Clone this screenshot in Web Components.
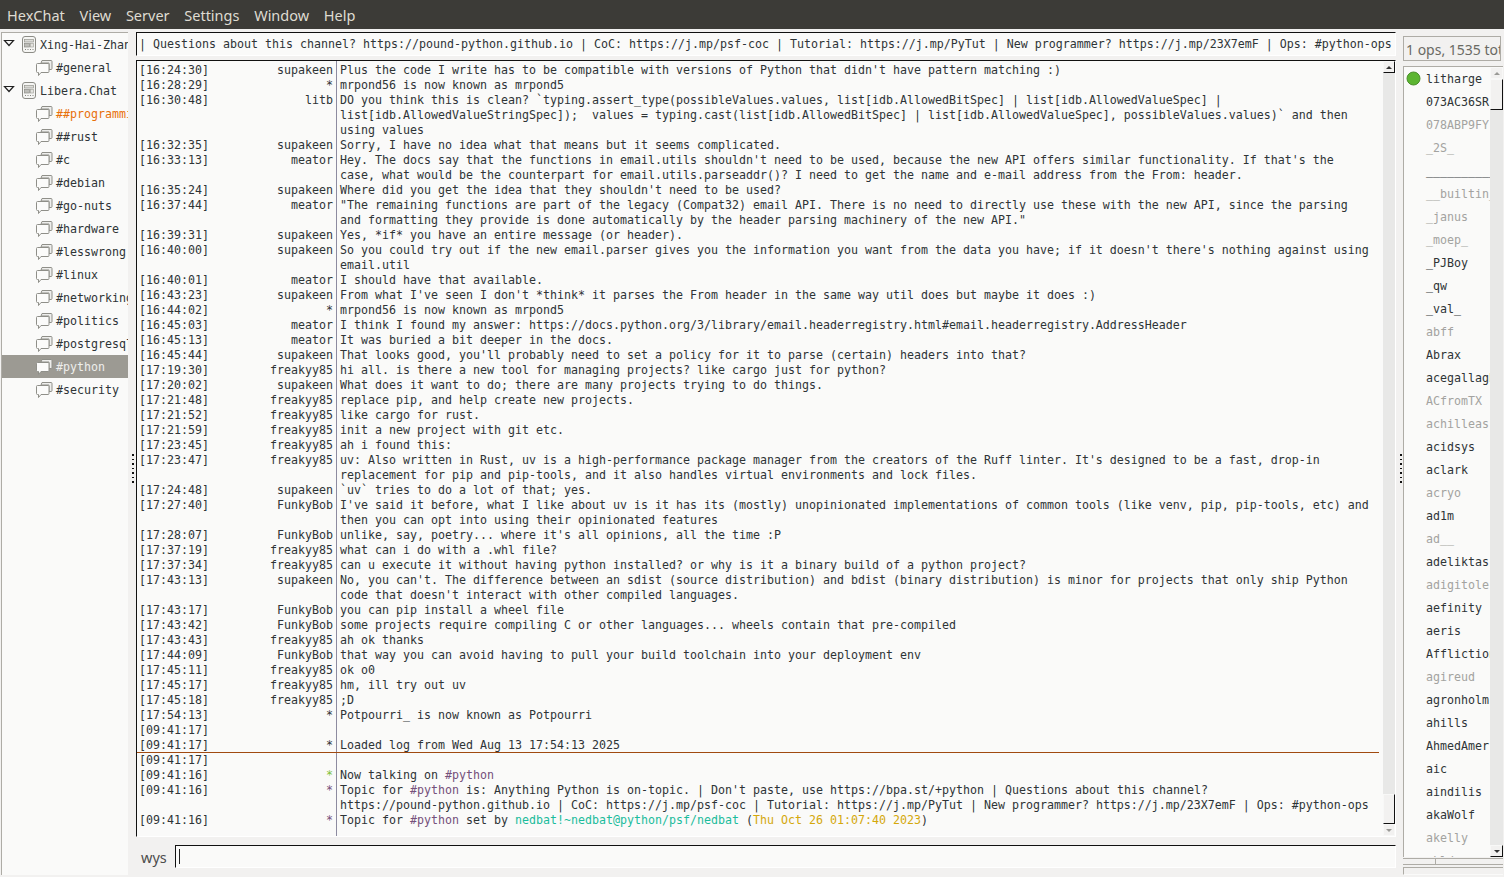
<!DOCTYPE html>
<html>
<head>
<meta charset="utf-8">
<title>HexChat</title>
<style>
    html, body { margin: 0; height: 100%; overflow: hidden; background: #f2f1f0; }
    body { display: flex; flex-direction: column; height: 877px; font-family: "DejaVu Sans Mono", monospace; font-size: 11.63px; color: #2e3436; }
    .main { flex: 1; display: flex; min-height: 0; }
    .center { flex: 1; display: flex; flex-direction: column; min-width: 0; }
    .purple { color: #75507b; }
    .teal { color: #1abc9c; }
    .gold { color: #d4a80a; }
    .nb { white-space: nowrap; }
</style>
</head>
<body>

<hc-menubar>
    <span>HexChat</span><span>View</span><span>Server</span><span>Settings</span><span>Window</span><span>Help</span>
</hc-menubar>

<div class="main">
    <hc-tree>
        <hc-tree-item kind="server">Xing-Hai-Zhan</hc-tree-item>
        <hc-tree-item>#general</hc-tree-item>
        <hc-tree-item kind="server">Libera.Chat</hc-tree-item>
        <hc-tree-item state="alert">##programming</hc-tree-item>
        <hc-tree-item>##rust</hc-tree-item>
        <hc-tree-item>#c</hc-tree-item>
        <hc-tree-item>#debian</hc-tree-item>
        <hc-tree-item>#go-nuts</hc-tree-item>
        <hc-tree-item>#hardware</hc-tree-item>
        <hc-tree-item>#lesswrong</hc-tree-item>
        <hc-tree-item>#linux</hc-tree-item>
        <hc-tree-item>#networking</hc-tree-item>
        <hc-tree-item>#politics</hc-tree-item>
        <hc-tree-item>#postgresql</hc-tree-item>
        <hc-tree-item state="selected">#python</hc-tree-item>
        <hc-tree-item>#security</hc-tree-item>
    </hc-tree>
    <hc-grip></hc-grip>
    <div class="center">
        <hc-topic>| Questions about this channel? https://pound-python.github.io | CoC: https://j.mp/psf-coc | Tutorial: https://j.mp/PyTut | New programmer? https://j.mp/23X7emF | Ops: #python-ops</hc-topic>
        <hc-chat>
            <hc-line t="16:24:30" n="supakeen">Plus the code I write has to be compatible with versions of Python that didn't have pattern matching :)</hc-line>
            <hc-line t="16:28:29" n="*">mrpond56 is now known as mrpond5</hc-line>
            <hc-line t="16:30:48" n="litb">DO you think this is clean? `typing.assert_type(possibleValues.values, list[idb.AllowedBitSpec] | list[idb.AllowedValueSpec] | list[idb.AllowedValueStringSpec]);  values = typing.cast(list[idb.AllowedBitSpec] | list[idb.AllowedValueSpec], possibleValues.values)` and then using values</hc-line>
            <hc-line t="16:32:35" n="supakeen">Sorry, I have no idea what that means but it seems complicated.</hc-line>
            <hc-line t="16:33:13" n="meator">Hey. The docs say that the functions in email.utils shouldn't need to be used, because the new API offers similar functionality. If that's the case, what would be the counterpart for email.utils.parseaddr()? I need to get the name and e-mail address from the From: header.</hc-line>
            <hc-line t="16:35:24" n="supakeen">Where did you get the idea that they shouldn't need to be used?</hc-line>
            <hc-line t="16:37:44" n="meator">"The remaining functions are part of the legacy (Compat32) email API. There is no need to directly use these with the new API, since the parsing and formatting they provide is done automatically by the header parsing machinery of the new API."</hc-line>
            <hc-line t="16:39:31" n="supakeen">Yes, *if* you have an entire message (or header).</hc-line>
            <hc-line t="16:40:00" n="supakeen">So you could try out if the new email.parser gives you the information you want from the data you have; if it doesn't there's nothing against using email.util</hc-line>
            <hc-line t="16:40:01" n="meator">I should have that available.</hc-line>
            <hc-line t="16:43:23" n="supakeen">From what I've seen I don't *think* it parses the From header in the same way util does but maybe it does :)</hc-line>
            <hc-line t="16:44:02" n="*">mrpond56 is now known as mrpond5</hc-line>
            <hc-line t="16:45:03" n="meator">I think I found my answer: https://docs.python.org/3/library/email.headerregistry.html#email.headerregistry.AddressHeader</hc-line>
            <hc-line t="16:45:13" n="meator">It was buried a bit deeper in the docs.</hc-line>
            <hc-line t="16:45:44" n="supakeen">That looks good, you'll probably need to set a policy for it to parse (certain) headers into that?</hc-line>
            <hc-line t="17:19:30" n="freakyy85">hi all. is there a new tool for managing projects? like cargo just for python?</hc-line>
            <hc-line t="17:20:02" n="supakeen">What does it want to do; there are many projects trying to do things.</hc-line>
            <hc-line t="17:21:48" n="freakyy85">replace pip, and help create new projects.</hc-line>
            <hc-line t="17:21:52" n="freakyy85">like cargo for rust.</hc-line>
            <hc-line t="17:21:59" n="freakyy85">init a new project with git etc.</hc-line>
            <hc-line t="17:23:45" n="freakyy85">ah i found this:</hc-line>
            <hc-line t="17:23:47" n="freakyy85">uv: Also written in Rust, uv is a high-performance package manager from the creators of the Ruff linter. It's designed to be a fast, drop-in replacement for pip and pip-tools, and it also handles virtual environments and lock files.</hc-line>
            <hc-line t="17:24:48" n="supakeen">`uv` tries to do a lot of that; yes.</hc-line>
            <hc-line t="17:27:40" n="FunkyBob">I've said it before, what I like about uv is it has its (mostly) unopinionated implementations of common tools (like venv, pip, pip-tools, etc) and then you can opt into using their opinionated features</hc-line>
            <hc-line t="17:28:07" n="FunkyBob">unlike, say, poetry... where it's all opinions, all the time :P</hc-line>
            <hc-line t="17:37:19" n="freakyy85">what can i do with a .whl file?</hc-line>
            <hc-line t="17:37:34" n="freakyy85">can u execute it without having python installed? or why is it a binary build of a python project?</hc-line>
            <hc-line t="17:43:13" n="supakeen">No, you can't. The difference between an sdist (source distribution) and bdist (binary distribution) is minor for projects that only ship Python code that doesn't interact with other compiled languages.</hc-line>
            <hc-line t="17:43:17" n="FunkyBob">you can pip install a wheel file</hc-line>
            <hc-line t="17:43:42" n="FunkyBob">some projects require compiling C or other languages... wheels contain that pre-compiled</hc-line>
            <hc-line t="17:43:43" n="freakyy85">ah ok thanks</hc-line>
            <hc-line t="17:44:09" n="FunkyBob">that way you can avoid having to pull your build toolchain into your deployment env</hc-line>
            <hc-line t="17:45:11" n="freakyy85">ok o0</hc-line>
            <hc-line t="17:45:17" n="freakyy85">hm, ill try out uv</hc-line>
            <hc-line t="17:45:18" n="freakyy85">;D</hc-line>
            <hc-line t="17:54:13" n="*">Potpourri_ is now known as Potpourri</hc-line>
            <hc-line t="09:41:17" n=""></hc-line>
            <hc-line t="09:41:17" n="*" marker>Loaded log from Wed Aug 13 17:54:13 2025</hc-line>
            <hc-line t="09:41:17" n=""></hc-line>
            <hc-line t="09:41:16" n="*" star="green">Now talking on <span class="purple">#python</span></hc-line>
            <hc-line t="09:41:16" n="*" star="purple">Topic for <span class="purple">#python</span> is: Anything Python is on-topic. | Don't paste, use https://bpa.st/+python | Questions about this channel? <span class="nb">https://pound-python.github.io</span> | CoC: https://j.mp/psf-coc | Tutorial: https://j.mp/PyTut | New programmer? https://j.mp/23X7emF | Ops: #python-ops</hc-line>
            <hc-line t="09:41:16" n="*" star="purple">Topic for <span class="purple">#python</span> set by <span class="teal">nedbat!~nedbat@python/psf/nedbat</span> (<span class="gold">Thu Oct 26 01:07:40 2023</span>)</hc-line>
        </hc-chat>
        <hc-input nick="wys"></hc-input>
    </div>
    <hc-grip end></hc-grip>
    <hc-userlist count="1 ops, 1535 total">
        <hc-user op>litharge</hc-user>
        <hc-user>073AC36SR</hc-user>
        <hc-user away>078ABP9FY</hc-user>
        <hc-user away>_2S_</hc-user>
        <hc-user>_____________</hc-user>
        <hc-user away>__builtin__</hc-user>
        <hc-user away>_janus</hc-user>
        <hc-user away>_moep_</hc-user>
        <hc-user>_PJBoy</hc-user>
        <hc-user>_qw</hc-user>
        <hc-user>_val_</hc-user>
        <hc-user away>abff</hc-user>
        <hc-user>Abrax</hc-user>
        <hc-user>acegallagher</hc-user>
        <hc-user away>ACfromTX</hc-user>
        <hc-user away>achilleas</hc-user>
        <hc-user>acidsys</hc-user>
        <hc-user>aclark</hc-user>
        <hc-user away>acryo</hc-user>
        <hc-user>ad1m</hc-user>
        <hc-user away>ad__</hc-user>
        <hc-user>adeliktas</hc-user>
        <hc-user away>adigitoler</hc-user>
        <hc-user>aefinity</hc-user>
        <hc-user>aeris</hc-user>
        <hc-user>Affliction</hc-user>
        <hc-user away>agireud</hc-user>
        <hc-user>agronholm</hc-user>
        <hc-user>ahills</hc-user>
        <hc-user>AhmedAmer</hc-user>
        <hc-user>aic</hc-user>
        <hc-user>aindilis</hc-user>
        <hc-user>akaWolf</hc-user>
        <hc-user away>akelly</hc-user>
        <hc-user away>akld</hc-user>
    </hc-userlist>
</div>

<script>
const SERVER_ICON = `
    <svg width="16" height="18" viewBox="0 0 16 18" fill="none">
        <rect x="1.5" y=".5" width="13" height="16" rx="2.5" fill="#f6f6f4" stroke="#8c8c86"/>
        <rect x="3.5" y="3.5" width="9" height="2.5" fill="#dcdcd8" stroke="#96968f" stroke-width=".7"/>
        <rect x="3.5" y="7.5" width="5" height="3.5" fill="#bdbdb8" stroke="#8c8c86" stroke-width=".7"/>
        <rect x="9.5" y="7.5" width="3" height="3.5" fill="#e4e4e0" stroke="#a5a59f" stroke-width=".7"/>
        <path d="M4 13.5h1M6.5 13.5h1M9 13.5h1M11.5 13.5h1" stroke="#85857f"/>
    </svg>`;
const CHAT_ICON = `
    <svg width="17" height="18" viewBox="0 0 17 18" fill="none">
        <path d="M6 1.5h9a1 1 0 0 1 1 1v7a1 1 0 0 1-1 1h-2v-6.5h-8z" fill="#eeeeec" stroke="#8f8f89"/>
        <path d="M1.5 4.5h10.500a1 1 0 0 1 1 1v7a1 1 0 0 1-1 1h-7l-2.500 3v-3h-1a1 1 0 0 1-1-1v-7a1 1 0 0 1 1-1z" fill="#fbfbfa" stroke="#8f8f89"/>
    </svg>`;

class HcMenubar extends HTMLElement {
    constructor() {
        super();
        this.attachShadow({ mode: 'open' }).innerHTML = `
            <style>
                :host {
                    display: flex;
                    flex: 0 0 29px;
                    align-items: center;
                    gap: 14.7px;
                    padding: 0 7px 0;
                    background: #3c3b37;
                    color: #dfdbd2;
                    font: 14.5px "Noto Sans", sans-serif;
                }
            </style>
            <slot></slot>`;
    }
}
customElements.define('hc-menubar', HcMenubar);

class HcTree extends HTMLElement {
    constructor() {
        super();
        this.attachShadow({ mode: 'open' }).innerHTML = `
            <style>
                :host {
                    display: block;
                    flex: 0 0 127px;
                    margin: 3px 1px 2px 1px;
                    overflow: hidden;
                    background: #fafaf9;
                    border-top: 1px solid #aeaca6;
                    border-left: 1px solid #aeaca6;
                    box-sizing: border-box;
                }
            </style>
            <slot></slot>`;
    }
}
customElements.define('hc-tree', HcTree);

class HcTreeItem extends HTMLElement {
    constructor() {
        super();
        const isServer = this.getAttribute('kind') === 'server';
        this.attachShadow({ mode: 'open' }).innerHTML = `
            <style>
                :host {
                    display: flex;
                    align-items: center;
                    height: 23px;
                    white-space: nowrap;
                    overflow: hidden;
                }
                :host([state="alert"]) .label { color: #e8700a; }
                :host([state="selected"]) { background: #9c9a93; }
                :host([state="selected"]) .label { color: #eeeeec; }
                .arrow { flex: 0 0 19px; display: flex; padding-left: 1px; padding-bottom: 3px; box-sizing: border-box; }
                .indent { flex: 0 0 34px; }
                .icon { display: flex; margin-right: 3px; }
                .server { margin-right: 3px; }
            </style>
            ${isServer
                ? `<span class="arrow"><svg width="12" height="8" viewBox="0 0 12 8"><path d="M1.5 1.5h9l-4.500 5z" fill="#fafaf9" stroke="#222" stroke-width="1.200"/></svg></span>
                   <span class="icon server">${SERVER_ICON}</span>`
                : `<span class="indent"></span><span class="icon">${CHAT_ICON}</span>`}
            <span class="label"><slot></slot></span>`;
    }
}
customElements.define('hc-tree-item', HcTreeItem);

class HcGrip extends HTMLElement {
    constructor() {
        super();
        this.attachShadow({ mode: 'open' }).innerHTML = `
            <style>
                :host {
                    display: flex;
                    flex: 0 0 7px;
                    box-sizing: border-box;
                    align-items: center;
                    justify-content: center;
                }
                :host([end]) { padding-left: 3px; }
                div {
                    width: 2px;
                    height: 32px;
                    margin-top: 33px;
                    background: repeating-linear-gradient(#111 0 1.5px, transparent 1.5px 4.5px);
                }
            </style>
            <div></div>`;
    }
}
customElements.define('hc-grip', HcGrip);

class HcTopic extends HTMLElement {
    constructor() {
        super();
        this.attachShadow({ mode: 'open' }).innerHTML = `
            <style>
                :host {
                    display: flex;
                    align-items: center;
                    flex: 0 0 24px;
                    margin-top: 3px;
                    padding-left: 2px;
                    box-sizing: border-box;
                    background: #fafaf9;
                    border: 1px solid #fff;
                    border-top-color: #111;
                    border-left-color: #111;
                    white-space: nowrap;
                    overflow: hidden;
                }
            </style>
            <slot></slot>`;
    }
}
customElements.define('hc-topic', HcTopic);

class HcScrollbar extends HTMLElement {
    constructor() {
        super();
        const before = this.getAttribute('before');
        const thumb = this.getAttribute('thumb');
        const dim = this.getAttribute('dim') || 'none';
        this.attachShadow({ mode: 'open' }).innerHTML = `
            <style>
                :host {
                    display: flex;
                    flex-direction: column;
                    flex: 0 0 12px;
                    background: #e8e8e7;
                }
                .btn, .thumb {
                    box-sizing: border-box;
                    background: #f2f1f0;
                    border: 1px solid #f8f8f7;
                    border-right: 1px solid #111;
                    border-bottom: 1px solid #111;
                }
                .btn { flex: 0 0 12px; display: flex; align-items: center; justify-content: center; }
                .thumb { flex: 0 0 ${thumb}px; }
                .gap { flex: 0 0 ${before}px; }
                .rest { flex: 1; }
                .dim { border: 1px solid #f8f8f7; }
                i { width: 0; height: 0; border: 3px solid transparent; }
                .up i { border-top: 0; border-bottom: 3px solid #333; }
                .down i { border-bottom: 0; border-top: 3px solid #333; }
                .up.dim i { border-bottom-color: #9a9a96; }
                .down.dim i { border-top-color: #9a9a96; }
            </style>
            <div class="btn up ${dim === 'up' ? 'dim' : ''}"><i></i></div>
            <div class="gap"></div>
            <div class="thumb"></div>
            <div class="rest"></div>
            <div class="btn down ${dim === 'down' ? 'dim' : ''}"><i></i></div>`;
    }
}
customElements.define('hc-scrollbar', HcScrollbar);

class HcChat extends HTMLElement {
    constructor() {
        super();
        this.attachShadow({ mode: 'open' }).innerHTML = `
            <style>
                :host {
                    display: flex;
                    flex: 0 0 777px;
                    margin-top: 4px;
                    box-sizing: border-box;
                    background: #fafaf9;
                    border: 1px solid #fff;
                    border-top-color: #111;
                    border-left-color: #111;
                }
                .log {
                    flex: 1;
                    min-width: 0;
                    overflow: hidden;
                    padding-top: 2px;
                    background: linear-gradient(#8d8ba0, #8d8ba0) 199px 0 / 1px 100% no-repeat;
                }
            </style>
            <div class="log"><slot></slot></div>
            <hc-scrollbar before="721" thumb="30" dim="down"></hc-scrollbar>`;
    }
}
customElements.define('hc-chat', HcChat);

class HcLine extends HTMLElement {
    constructor() {
        super();
        const nick = this.getAttribute('n');
        this.attachShadow({ mode: 'open' }).innerHTML = `
            <style>
                :host {
                    display: grid;
                    grid-template-columns: 194px 1fr;
                    column-gap: 7px;
                    margin-right: 4px;
                    padding: 0 8px 0 2px;
                    line-height: 15px;
                }
                :host([marker]) { box-shadow: inset 0 -1px 0 #a04a10; }
                :host([star="green"]) .nick { color: #7fc13a; }
                :host([star="purple"]) .nick { color: #75507b; }
                .meta { display: flex; justify-content: space-between; white-space: pre; }
                .text { white-space: pre-wrap; min-width: 0; }
            </style>
            <div class="meta"><span>[${this.getAttribute('t')}]</span><span class="nick">${nick}</span></div>
            <div class="text"><slot></slot></div>`;
    }
}
customElements.define('hc-line', HcLine);

class HcInput extends HTMLElement {
    constructor() {
        super();
        this.attachShadow({ mode: 'open' }).innerHTML = `
            <style>
                :host {
                    display: flex;
                    align-items: center;
                    flex: 0 0 23px;
                    margin-top: 8px;
                    font: 14.5px "Noto Sans", sans-serif;
                    color: #4c4c4c;
                }
                .nick { flex: 0 0 39px; padding-left: 5px; box-sizing: border-box; }
                .field {
                    flex: 1;
                    align-self: stretch;
                    display: flex;
                    align-items: center;
                    padding-left: 3px;
                    box-sizing: border-box;
                    background: #fafaf9;
                    border: 1px solid #fff;
                    border-top-color: #111;
                    border-left-color: #111;
                }
                .caret { width: 1px; height: 15px; background: #222; }
            </style>
            <span class="nick">${this.getAttribute('nick')}</span>
            <div class="field"><span class="caret"></span></div>`;
    }
}
customElements.define('hc-input', HcInput);

class HcUserlist extends HTMLElement {
    constructor() {
        super();
        this.attachShadow({ mode: 'open' }).innerHTML = `
            <style>
                :host {
                    display: flex;
                    flex-direction: column;
                    flex: 0 0 101px;
                    height: 848px;
                    min-width: 0;
                    margin-top: 7px;
                    overflow: hidden;
                }
                .count {
                    flex: none;
                    height: 25px;
                    box-sizing: border-box;
                    border: 1px solid #aeaca6;
                    padding-left: 2px;
                    margin-right: 3px;
                    font: 14px/25px "Noto Sans", sans-serif;
                    color: #6a6a64;
                    white-space: nowrap;
                    overflow: hidden;
                }
                .list {
                    flex: none;
                    height: 791px;
                    display: flex;
                    margin: 5px 1px 0 0;
                    box-sizing: border-box;
                    border-top: 1px solid #aeaca6;
                    border-left: 1px solid #aeaca6;
                    background: #fafaf9;
                    overflow: hidden;
                }
                .names { flex: 1; min-width: 0; height: 100%; overflow: hidden; }
                .hbar {
                    flex: none;
                    height: 7px;
                    margin: 1px 1px 0 0;
                    box-sizing: border-box;
                    border-top: 1px solid #aeaca6;
                    border-bottom: 1px solid #aeaca6;
                }
                .hbar div { width: 33px; height: 100%; box-sizing: border-box; border-right: 1px solid #aeaca6; background: #f2f1f0; }
                .status {
                    flex: none;
                    height: 8px;
                    margin: 2px 1px 0 0;
                    box-sizing: border-box;
                    border-top: 1px solid #aeaca6;
                    border-left: 1px solid #aeaca6;
                    border-bottom: 1px solid #fafaf9;
                }
                hc-scrollbar { flex-basis: 13px; }
            </style>
            <div class="count">${this.getAttribute('count')}</div>
            <div class="list">
                <div class="names"><slot></slot></div>
                <hc-scrollbar before="0" thumb="31" dim="up"></hc-scrollbar>
            </div>
            <div class="hbar"><div></div></div>
            <div class="status"></div>`;
    }
}
customElements.define('hc-userlist', HcUserlist);

class HcUser extends HTMLElement {
    constructor() {
        super();
        this.attachShadow({ mode: 'open' }).innerHTML = `
            <style>
                :host {
                    display: flex;
                    align-items: center;
                    height: 23px;
                    white-space: nowrap;
                    overflow: hidden;
                }
                :host([away]) { color: #a3a3a0; }
                .dot { flex: 0 0 22px; display: flex; padding-left: 2px; box-sizing: border-box; }
            </style>
            <span class="dot">${this.hasAttribute('op')
                ? '<svg width="15" height="15" viewBox="0 0 15 15"><circle cx="7.5" cy="7.5" r="6.5" fill="#5cb531" stroke="#4a8f2a"/></svg>'
                : ''}</span>
            <slot></slot>`;
    }
}
customElements.define('hc-user', HcUser);
</script>
</body>
</html>
